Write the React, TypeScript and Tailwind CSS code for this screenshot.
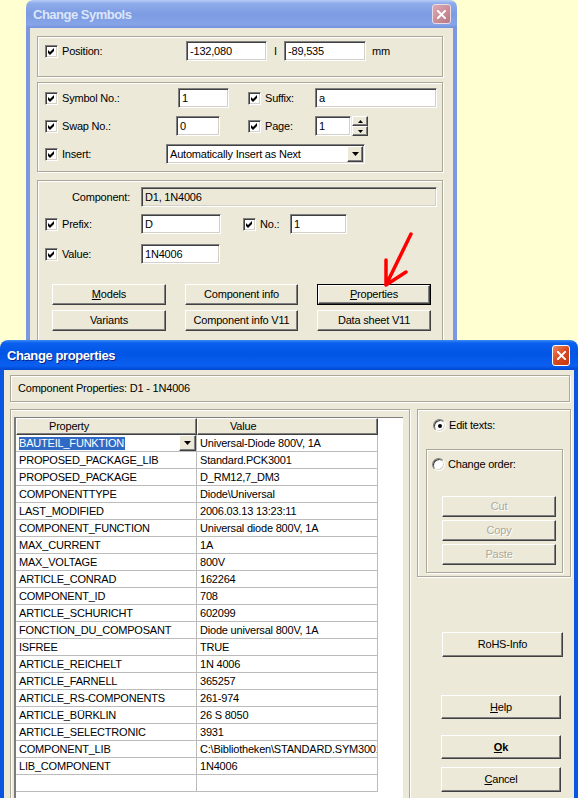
import React from "react";

const etched = "border border-[#aca899] shadow-[inset_1px_1px_0_#fff,1px_1px_0_#fff]";
const sunken =
  "border border-t-[#808080] border-l-[#808080] border-b-white border-r-white shadow-[inset_1px_1px_0_#404040,inset_-1px_-1px_0_#d4d0c8]";
const raised =
  "border border-t-white border-l-white border-b-[#404040] border-r-[#404040] shadow-[inset_-1px_-1px_0_#808080]";

const rows: [string, string][] = [
  ["BAUTEIL_FUNKTION", "Universal-Diode 800V, 1A"],
  ["PROPOSED_PACKAGE_LIB", "Standard.PCK3001"],
  ["PROPOSED_PACKAGE", "D_RM12,7_DM3"],
  ["COMPONENTTYPE", "Diode\\Universal"],
  ["LAST_MODIFIED", "2006.03.13 13:23:11"],
  ["COMPONENT_FUNCTION", "Universal diode 800V, 1A"],
  ["MAX_CURRENT", "1A"],
  ["MAX_VOLTAGE", "800V"],
  ["ARTICLE_CONRAD", "162264"],
  ["COMPONENT_ID", "708"],
  ["ARTICLE_SCHURICHT", "602099"],
  ["FONCTION_DU_COMPOSANT", "Diode universal 800V, 1A"],
  ["ISFREE", "TRUE"],
  ["ARTICLE_REICHELT", "1N 4006"],
  ["ARTICLE_FARNELL", "365257"],
  ["ARTICLE_RS-COMPONENTS", "261-974"],
  ["ARTICLE_BÜRKLIN", "26 S 8050"],
  ["ARTICLE_SELECTRONIC", "3931"],
  ["COMPONENT_LIB", "C:\\Bibliotheken\\STANDARD.SYM3001"],
  ["LIB_COMPONENT", "1N4006"],
  ["", ""],
];

function Check() {
  return (
    <span className={`${sunken} bg-white w-[13px] h-[13px] shrink-0 flex items-center justify-center`}>
      <svg width="7" height="7" viewBox="0 0 7 7">
        <polygon points="0,2 2,4 6,0 6,3 2,7 0,5" fill="#000" />
      </svg>
    </span>
  );
}

function Radio({ on }: { on?: boolean }) {
  return (
    <span className={`${sunken} bg-white w-[13px] h-[13px] rounded-full shrink-0 flex items-center justify-center`}>
      {on && <span className="w-[4px] h-[4px] rounded-full bg-black" />}
    </span>
  );
}

function Labeled({ className, text }: { className: string; text: string }) {
  return (
    <div className={`flex items-center shrink-0 ${className}`}>
      <Check />
      <span className="ml-[4px]">{text}</span>
    </div>
  );
}

function Field({ className, value, disabled }: { className: string; value: string; disabled?: boolean }) {
  return (
    <div
      className={`${sunken} ${disabled ? "bg-[#ece9d8]" : "bg-white"} h-5 shrink-0 flex items-center pl-[3px] overflow-hidden whitespace-nowrap ${className}`}
    >
      {value}
    </div>
  );
}

function Arrow({ dir = "down", small }: { dir?: "down" | "up"; small?: boolean }) {
  const w = small ? 5 : 7;
  const h = small ? 3 : 4;
  return (
    <svg width={w} height={h} viewBox={`0 0 ${w} ${h}`}>
      {dir === "down" ? (
        <path d={`M0 0 H${w} L${w / 2} ${h} Z`} fill="#000" />
      ) : (
        <path d={`M${w / 2} 0 L${w} ${h} H0 Z`} fill="#000" />
      )}
    </svg>
  );
}

function Btn({
  className,
  children,
  def,
  disabled,
}: {
  className: string;
  children: React.ReactNode;
  def?: boolean;
  disabled?: boolean;
}) {
  const txt = disabled ? "text-[#aca899] [text-shadow:1px_1px_0_#fff]" : "";
  if (def) {
    return (
      <div className={`border border-black shrink-0 ${className}`}>
        <div className={`${raised} bg-[#ece9d8] w-full h-full flex items-center justify-center`}>{children}</div>
      </div>
    );
  }
  return (
    <div className={`${raised} ${txt} bg-[#ece9d8] shrink-0 flex items-center justify-center ${className}`}>
      {children}
    </div>
  );
}

function CloseX() {
  return (
    <svg width="9" height="9" viewBox="0 0 10 10">
      <path d="M1 1 L9 9 M9 1 L1 9" stroke="#fff" strokeWidth="2.2" strokeLinecap="square" />
    </svg>
  );
}

function ChangeSymbols() {
  return (
    <div className="absolute left-[26px] top-0 w-[431px] h-[370px] flex flex-col">
      <div className="shrink-0 h-[28px] rounded-t-[7px] bg-[linear-gradient(180deg,#b8cdf6,#8eabeb_12%,#7c9be2_50%,#86a4e8_88%,#7391dc)] flex items-center pl-[7px] pr-[6px]">
        <span className="text-[13px] font-bold text-[#dce6fa] tracking-[-0.5px] mt-[2px]">Change Symbols</span>
        <div className="ml-auto w-[19px] h-[20px] rounded-[3px] border border-[#eadbe2] bg-[linear-gradient(135deg,#dcaab4,#b97684)] flex items-center justify-center">
          <CloseX />
        </div>
      </div>
      <div className="flex-1 min-h-0 border-x-4 border-[#7b98e0] bg-[#ece9d8] pt-[8px] pl-[7px]">
        {/* position */}
        <div className={`${etched} w-[406px] h-[41px] pt-[4px] pl-[7px]`}>
          <div className="flex items-center h-5">
            <Labeled className="w-[141px]" text="Position:" />
            <Field className="w-[81px]" value="-132,080" />
            <span className="w-[17px] text-center">I</span>
            <Field className="w-[82px]" value="-89,535" />
            <span className="ml-[6px]">mm</span>
          </div>
        </div>

        {/* symbol */}
        <div className={`${etched} w-[406px] h-[90px] mt-[5px] pt-[5px] pl-[7px] flex flex-col gap-[8px]`}>
          <div className="flex items-center h-5">
            <Labeled className="w-[133px]" text="Symbol No.:" />
            <Field className="w-[51px]" value="1" />
            <Labeled className="w-[67px] ml-[19px]" text="Suffix:" />
            <Field className="w-[122px]" value="a" />
          </div>
          <div className="flex items-center h-5">
            <Labeled className="w-[131px]" text="Swap No.:" />
            <Field className="w-[44px]" value="0" />
            <Labeled className="w-[67px] ml-[28px]" text="Page:" />
            <Field className="w-[36px]" value="1" />
            <div className="ml-[1px] w-[16px] h-5 flex flex-col">
              <div className={`${raised} bg-[#ece9d8] h-[10px] flex items-center justify-center`}>
                <Arrow dir="up" small />
              </div>
              <div className={`${raised} bg-[#ece9d8] h-[10px] flex items-center justify-center`}>
                <Arrow dir="down" small />
              </div>
            </div>
          </div>
          <div className="flex items-center h-5">
            <Labeled className="w-[121px]" text="Insert:" />
            <div className={`${sunken} bg-white w-[199px] h-5 flex items-center pl-[3px] pr-[1px]`}>
              <span className="whitespace-nowrap">Automatically Insert as Next</span>
              <div className={`${raised} bg-[#ece9d8] ml-auto w-[16px] h-[16px] flex items-center justify-center`}>
                <Arrow />
              </div>
            </div>
          </div>
        </div>

        {/* component */}
        <div className={`${etched} w-[406px] h-[200px] mt-[8px] pt-[6px] pl-[7px]`}>
          <div className="flex items-center h-5">
            <div className="w-[96px] text-right pr-[11px]">Component:</div>
            <Field className="w-[296px]" value="D1, 1N4006" disabled />
          </div>
          <div className="flex items-center h-5 mt-[7px]">
            <Labeled className="w-[96px]" text="Prefix:" />
            <Field className="w-[80px]" value="D" />
            <Labeled className="w-[47px] ml-[22px]" text="No.:" />
            <Field className="w-[57px]" value="1" />
          </div>
          <div className="flex items-center h-5 mt-[10px]">
            <Labeled className="w-[96px]" text="Value:" />
            <Field className="w-[79px]" value="1N4006" />
          </div>
          <div className="flex gap-[19px] mt-[20px] ml-[7px]">
            <Btn className="w-[114px] h-[21px]">
              <span><u>M</u>odels</span>
            </Btn>
            <Btn className="w-[113px] h-[21px]">Component info</Btn>
            <Btn className="w-[114px] h-[21px]" def>
              <span><u>P</u>roperties</span>
            </Btn>
          </div>
          <div className="flex gap-[19px] mt-[5px] ml-[7px]">
            <Btn className="w-[114px] h-[21px]">Variants</Btn>
            <Btn className="w-[113px] h-[21px]">Component info V11</Btn>
            <Btn className="w-[114px] h-[21px]">Data sheet V11</Btn>
          </div>
        </div>
      </div>
    </div>
  );
}

function ChangeProperties() {
  return (
    <div className="absolute left-0 top-[340px] w-[578px] h-[470px] flex flex-col">
      <div className="shrink-0 h-[30px] rounded-t-[8px] bg-[linear-gradient(180deg,#3b8cf5,#0c60ee_10%,#0055e5_45%,#0a5ff0_85%,#0046d0)] flex items-center pl-[7px] pr-[8px]">
        <span className="text-[13px] font-bold text-white tracking-[-0.4px] [text-shadow:1px_1px_0_#0a1e8a] mt-[1px]">
          Change properties
        </span>
        <div className="ml-auto w-[18px] h-[21px] rounded-[3px] border border-white bg-[linear-gradient(135deg,#ec8a66,#d8481f_50%,#c23a12)] flex items-center justify-center">
          <CloseX />
        </div>
      </div>
      <div className="flex-1 min-h-0 border-x-4 border-[#0a56e0] bg-[#ece9d8] flex flex-col">
        <div className={`${etched} shrink-0 ml-[6px] mt-[5px] w-[560px] h-[27px] pl-[7px] flex items-center`}>
          Component Properties: D1 - 1N4006
        </div>
        <div className="flex mt-[7px] shrink-0">
          {/* list panel */}
          <div className={`${etched} ml-[6px] w-[400px] h-[420px] pl-[3px] pt-[7px]`}>
            <div className="w-[389px] h-[400px] bg-white border-t border-l-2 border-t-[#808080] border-l-[#7a7a7a]">
              <div className="flex h-[17px]">
                <div className={`${raised} bg-[#ece9d8] w-[181px] pl-[32px] flex items-center`}>Property</div>
                <div className={`${raised} bg-[#ece9d8] w-[181px] pl-[32px] flex items-center`}>Value</div>
              </div>
              {rows.map(([k, v], i) => (
                <div key={i} className="flex h-[17px] w-[362px] border-b border-[#bcbcbc]">
                  <div className="w-[181px] border-r border-[#bcbcbc] pl-[3px] flex items-center whitespace-nowrap overflow-hidden">
                    {i === 0 ? (
                      <>
                        <span className="bg-[#316ac5] text-white leading-[13px] pr-[1px]">{k}</span>
                        <div className={`${raised} bg-[#ece9d8] ml-auto w-[17px] h-full flex items-center justify-center`}>
                          <Arrow />
                        </div>
                      </>
                    ) : (
                      k
                    )}
                  </div>
                  <div className="w-[181px] border-r border-[#bcbcbc] pl-[3px] flex items-center whitespace-nowrap overflow-hidden">
                    {v}
                  </div>
                </div>
              ))}
            </div>
          </div>

          {/* right column */}
          <div className="ml-[7px] w-[154px] flex flex-col">
            <div className={`${etched} shrink-0 h-[168px] pl-[15px] pt-[9px]`}>
              <div className="flex items-center h-[13px]">
                <Radio on />
                <span className="ml-[3px]">Edit texts:</span>
              </div>
              <div className={`${etched} -ml-[7px] mt-[17px] w-[137px] h-[124px] pt-[8px]`}>
                <div className="flex items-center h-[13px] pl-[5px]">
                  <Radio />
                  <span className="ml-[3px]">Change order:</span>
                </div>
                <div className="flex flex-col gap-[3px] mt-[25px] pl-[15px]">
                  <Btn className="w-[114px] h-[21px]" disabled>Cut</Btn>
                  <Btn className="w-[114px] h-[21px]" disabled>Copy</Btn>
                  <Btn className="w-[114px] h-[21px]" disabled>Paste</Btn>
                </div>
              </div>
            </div>
            <Btn className="ml-[25px] mt-[55px] w-[121px] h-[25px]">RoHS-Info</Btn>
            <Btn className="ml-[24px] mt-[38px] w-[120px] h-[24px]">
              <span><u>H</u>elp</span>
            </Btn>
            <Btn className="ml-[24px] mt-[16px] w-[120px] h-[24px]">
              <span className="font-bold"><u>O</u>k</span>
            </Btn>
            <Btn className="ml-[24px] mt-[8px] w-[120px] h-[25px]">
              <span><u>C</u>ancel</span>
            </Btn>
          </div>
        </div>
      </div>
    </div>
  );
}

export default function App() {
  return (
    <div className="relative w-[578px] h-[798px] overflow-hidden bg-[#ffffd2] text-black text-[11px] tracking-[-0.2px] font-['Liberation_Sans',Arial,sans-serif]">
      <ChangeSymbols />
      <svg className="absolute left-[378px] top-[228px]" width="40" height="62" viewBox="0 0 40 62">
        <path
          d="M33 6 L8 57 M8 57 L8 32 M8 57 L28 44"
          stroke="#f00"
          strokeWidth="3.5"
          strokeLinecap="round"
          strokeLinejoin="round"
          fill="none"
        />
      </svg>
      <ChangeProperties />
    </div>
  );
}
